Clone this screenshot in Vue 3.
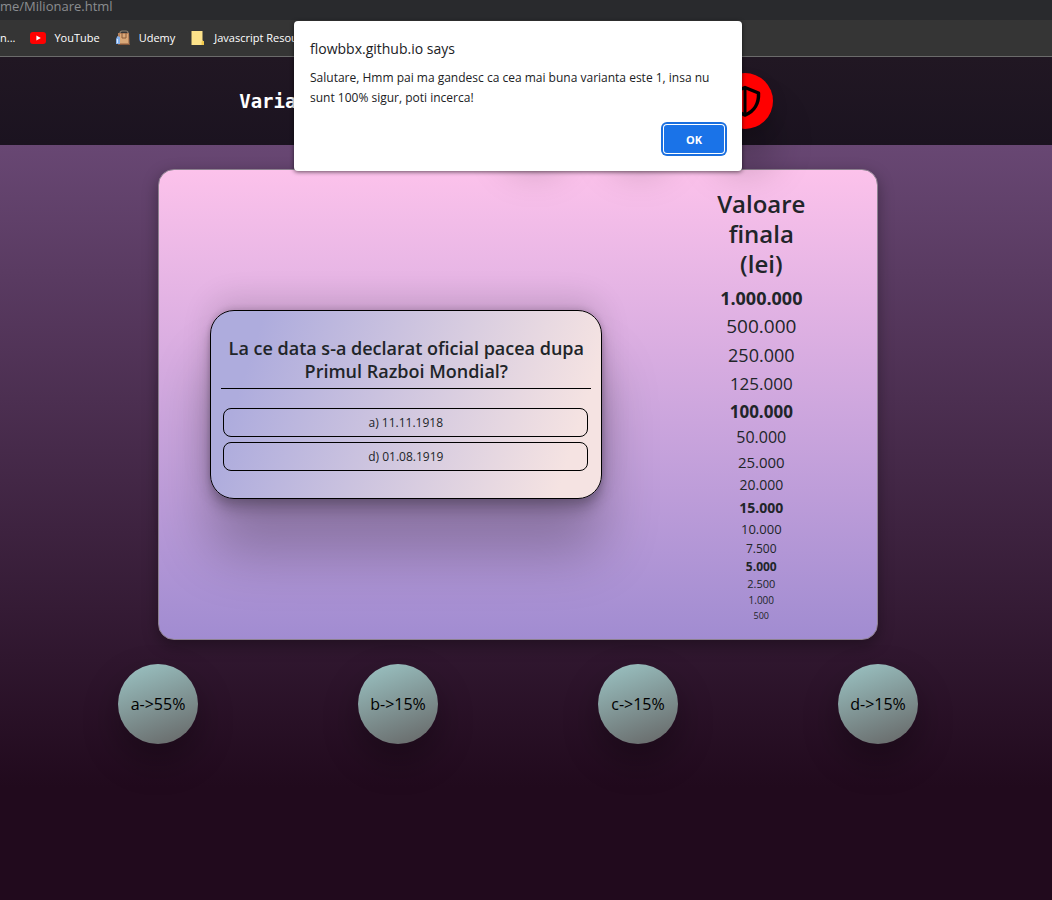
<script setup>
const prizes = [
  { label: '1.000.000', step: 1, safe: true },
  { label: '500.000', step: 2 },
  { label: '250.000', step: 3 },
  { label: '125.000', step: 4 },
  { label: '100.000', step: 5, safe: true },
  { label: '50.000', step: 6 },
  { label: '25.000', step: 7 },
  { label: '20.000', step: 8 },
  { label: '15.000', step: 9, safe: true },
  { label: '10.000', step: 10 },
  { label: '7.500', step: 11 },
  { label: '5.000', step: 12, safe: true },
  { label: '2.500', step: 13 },
  { label: '1.000', step: 14 },
  { label: '500', step: 15 }
]
const answers = ['a) 11.11.1918', 'd) 01.08.1919']
const votes = ['a->55%', 'b->15%', 'c->15%', 'd->15%']
</script>

<template>
  <div class="window">
    <div class="address">me/Milionare.html</div>
    <nav class="bookmarks" aria-label="Bookmarks">
      <a href="#">n...</a>
      <a href="#">
        <svg class="yt" viewBox="0 0 16 12" aria-hidden="true">
          <rect width="16" height="12" rx="3" fill="#f00" />
          <path d="M6.400 3.400v5.200L10.800 6z" fill="#fff" />
        </svg>
        YouTube
      </a>
      <a href="#">
        <svg class="bag" viewBox="0 0 14 16" aria-hidden="true">
          <path d="M4 5V3a2 2 0 0 1 2-2h4a2 2 0 0 1 2 2v2" fill="none" stroke="#8d8272" stroke-width="1.200" />
          <path d="M2 3h11l.5 12H2z" fill="#b5815a" />
          <path d="M4 4h8v9H4z" fill="#d9a878" />
          <path d="M6 3v5M10 3v5M6 8h4" fill="none" stroke="#8a5a38" />
          <path d="M2 14.500h12" stroke="#85573a" />
          <path d="M0 9l1.500-3L4 7v7H0z" fill="#84b0ea" />
          <path d="M1 9h1v4H1z" fill="#dcebff" />
        </svg>
        Udemy
      </a>
      <a href="#">
        <svg class="note" viewBox="0 0 13 14" aria-hidden="true">
          <path d="M0 0h11v9.500l1.500 1V14H0z" fill="#fde28a" />
          <path d="M10 14v-3l1-1.500 1.500 1V14z" fill="#f2c94c" />
        </svg>
        Javascript Resources
      </a>
    </nav>

    <div class="page">
      <header class="top">
        <span class="label">Variante</span>
        <div class="helps">
          <button type="button" class="help" aria-label="50/50"></button>
          <button type="button" class="help" aria-label="Public"></button>
          <button type="button" class="help" aria-label="Scut">
            <svg viewBox="0 0 32 32" aria-hidden="true">
              <path d="M16 2.500L29.500 8c.5 10-4 18.500-13.500 22C6.500 26.500 2 18 2.500 8z" fill="none" stroke="#000" stroke-width="3.500" stroke-linejoin="round" />
              <path d="M16 3v26" stroke="#000" stroke-width="3" />
            </svg>
          </button>
        </div>
      </header>

      <main>
        <section class="panel">
          <div class="question">
            <h2>La ce data s-a declarat oficial pacea dupa Primul Razboi Mondial?</h2>
            <div class="answers">
              <button v-for="a in answers" :key="a" type="button">{{ a }}</button>
            </div>
          </div>
          <div class="ladder">
            <h1>Valoare finala (lei)</h1>
            <ol>
              <li v-for="p in prizes" :key="p.label" :class="['s' + p.step, { safe: p.safe }]">{{ p.label }}</li>
            </ol>
          </div>
        </section>
        <ul class="votes">
          <li v-for="v in votes" :key="v"><span>{{ v }}</span></li>
        </ul>
      </main>
    </div>

    <div class="dialog" role="dialog" aria-labelledby="dlg-title">
      <div id="dlg-title" class="dlg-title">flowbbx.github.io says</div>
      <p>Salutare, Hmm pai ma gandesc ca cea mai buna varianta este 1, insa nu sunt 100% sigur, poti incerca!</p>
      <div class="actions"><button type="button">OK</button></div>
    </div>
  </div>
</template>

<style>
body { background: #210a1d; }
</style>

<style scoped>
* { box-sizing: border-box; }
.window {
  position: relative;
  min-height: 100vh;
  display: flex;
  flex-direction: column;
  overflow: hidden;
  font-family: "Open Sans", "Noto Sans", sans-serif;
  color: #212529;
}
button { font-family: inherit; color: inherit; cursor: pointer; }
.address {
  height: 20px;
  line-height: 12px;
  font-size: 13px;
  color: #8b8d90;
  background: #292a2d;
}
.bookmarks {
  height: 37px;
  display: flex;
  align-items: center;
  gap: 15px;
  padding-bottom: 1px;
  background: #353535;
  border-bottom: 1px solid #6b6b6b;
  white-space: nowrap;
}
.bookmarks a {
  display: flex;
  align-items: center;
  gap: 8px;
  font-size: 11px;
  color: #fff;
  text-decoration: none;
}
.yt { width: 16px; height: 12px; }
.bag { width: 16px; height: 16px; }
.note { width: 16px; height: 14px; }
.page {
  flex: 1;
  background: linear-gradient(#684773 88px, #210a1d 730px);
}
.top {
  position: relative;
  z-index: 1;
  height: 88px;
  padding-right: 40px;
  display: flex;
  align-items: center;
  justify-content: center;
  gap: 176px;
  background: linear-gradient(#211723, #1b1320);
}
.label {
  font: 700 19px/24px "DejaVu Sans Mono", monospace;
  color: #fff;
}
.helps { display: flex; gap: 49px; }
.help {
  width: 56px;
  height: 56px;
  padding: 12px;
  border: 0;
  border-radius: 50%;
  background: #f00;
  color: #000;
}
.help svg { display: block; width: 32px; height: 32px; }
.help, .votes span {
  box-shadow: rgba(0, 0, 0, .25) 0 40px 40px, rgba(0, 0, 0, .15) 0 8px 16px;
}
.votes span { box-shadow: rgba(0, 0, 0, .3) 0 16px 36px; }
main { padding: 24px 16px 24px 0; }
.panel {
  max-width: 720px;
  margin: 0 auto;
  padding: 15px 8px 15px 0;
  display: grid;
  grid-template-columns: 496fr 216fr;
  align-items: center;
  border: 1px solid #8d8290;
  border-radius: 16px;
  background: linear-gradient(#fcc2eb, #a18cd1);
  box-shadow: rgba(0, 0, 0, .35) 0 5px 15px;
}
.question {
  width: 392px;
  margin: 0 auto;
  padding: 26px 10px 27px;
  border: 1px solid #000;
  border-radius: 24px;
  background: linear-gradient(108deg, #aeacdd 12%, #f5e3e2 90%);
  box-shadow: rgba(0, 0, 0, .25) 0 54px 55px, rgba(0, 0, 0, .12) 0 -12px 30px,
    rgba(0, 0, 0, .12) 0 4px 6px, rgba(0, 0, 0, .17) 0 12px 13px, rgba(0, 0, 0, .09) 0 -3px 5px;
}
h2 {
  margin: 0;
  padding-bottom: 5px;
  border-bottom: 1px solid #000;
  font-size: 18px;
  line-height: 23px;
  font-weight: 600;
  text-align: center;
}
.answers {
  padding: 19px 3px 0 2px;
  display: flex;
  flex-direction: column;
  gap: 5px;
}
.answers button {
  height: 29px;
  padding: 0;
  border: 1px solid #000;
  border-radius: 8px;
  background: transparent;
  font-size: 12px;
}
.ladder { padding-top: 4px; text-align: center; }
h1 {
  width: 100px;
  margin: 0 auto 6px;
  font-size: 24px;
  line-height: 30px;
  font-weight: 600;
}
ol, ul { margin: 0; padding: 0; list-style: none; }
.safe { font-weight: 700; }
.s1 { font-size: 18px; line-height: 27px; }
.s2 { font-size: 19px; line-height: 29px; }
.s3 { font-size: 18px; line-height: 29px; }
.s4 { font-size: 17px; line-height: 28px; }
.s5 { font-size: 17px; line-height: 27px; }
.s6 { font-size: 16px; line-height: 25px; }
.s7 { font-size: 15px; line-height: 24px; }
.s8 { font-size: 14px; line-height: 22px; }
.s9 { font-size: 14px; line-height: 23px; }
.s10 { font-size: 13px; line-height: 21px; }
.s11, .s12 { font-size: 12px; line-height: 18px; }
.s13 { font-size: 11px; line-height: 16px; }
.s14 { font-size: 10px; line-height: 16px; }
.s15 { font-size: 9px; line-height: 16px; }
.votes {
  max-width: 960px;
  margin: 24px auto 0;
  display: grid;
  grid-template-columns: repeat(4, 1fr);
  justify-items: center;
}
.votes span {
  width: 80px;
  height: 80px;
  display: flex;
  align-items: center;
  justify-content: center;
  border-radius: 50%;
  background: linear-gradient(160deg, #9cc5c5, #656565);
  font-size: 16px;
  color: #000;
}
.dialog {
  position: absolute;
  top: 21px;
  left: 0;
  right: 16px;
  z-index: 2;
  width: 448px;
  margin: 0 auto;
  padding: 16px;
  background: #fff;
  border-radius: 4px;
  box-shadow: 0 1px 4px rgba(0, 0, 0, .6);
  color: #202124;
}
.dlg-title { font-size: 14px; line-height: 24px; }
.dialog p { margin: 7px 0 15px; font-size: 12px; line-height: 20px; }
.actions { display: flex; justify-content: flex-end; }
.actions button {
  width: 60px;
  height: 28px;
  margin: 2px;
  padding: 0;
  border: 0;
  border-radius: 3px;
  background: #1a73e8;
  box-shadow: 0 0 0 1px #fff, 0 0 0 3px #1a6fdf;
  color: #fff;
  font-size: 11px;
  font-weight: 700;
}
</style>
